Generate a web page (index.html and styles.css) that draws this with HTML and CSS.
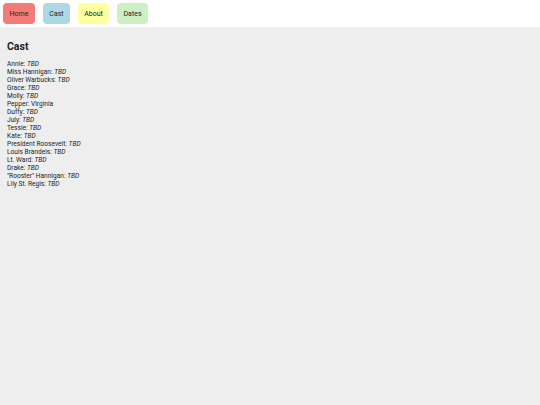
FILE: index.html
```html
<!DOCTYPE html>
<html lang="en">
<head>
  <meta charset="UTF-8">
  <title>Annie</title>
  <link rel="stylesheet" href="styles.css">
</head>
<body>

<div class="nav">
  <button class="home">Home</button>
  <button class="cast">Cast</button>
  <button class="about">About</button>
  <button class="dates">Dates</button>
</div>

<div class="content">
  <h2>Cast</h2>
  <div class="list">
    Annie: <em>TBD</em><br>
    Miss Hannigan: <em>TBD</em><br>
    Oliver Warbucks: <em>TBD</em><br>
    Grace: <em>TBD</em><br>
    Molly: <em>TBD</em><br>
    Pepper: Virginia<br>
    Duffy: <em>TBD</em><br>
    July: <em>TBD</em><br>
    Tessie: <em>TBD</em><br>
    Kate: <em>TBD</em><br>
    President Roosevelt: <em>TBD</em><br>
    Louis Brandeis: <em>TBD</em><br>
    Lt. Ward: <em>TBD</em><br>
    Drake: <em>TBD</em><br>
    "Rooster" Hannigan: <em>TBD</em><br>
    Lily St. Regis: <em>TBD</em>
  </div>
</div>

</body>
</html>
```

FILE: styles.css
```css
body {
  font-family: Roboto, sans-serif;
  background: #eeeeee;
  margin: 0;
  color: #222;
}

.nav {
  background: #fff;
  display: flex;
  gap: 8px;
  padding: 3px;
  height: 21px;
}

button {
  font-family: Roboto, sans-serif;
  font-size: 7px;
  border: none;
  border-radius: 4px;
  padding: 0;
  color: #222;
}

.home { background: #f47c78; width: 32px; }
.cast { background: #add8e6; width: 27px; }
.about { background: #ffffa0; width: 31px; }
.dates { background: #ccf0c4; width: 31px; }

.content {
  padding: 0 7px;
}

h2 {
  font-size: 10.5px;
  margin: 13px 0 7px;
}

.list {
  font-size: 6.6px;
  line-height: 8px;
}
```
